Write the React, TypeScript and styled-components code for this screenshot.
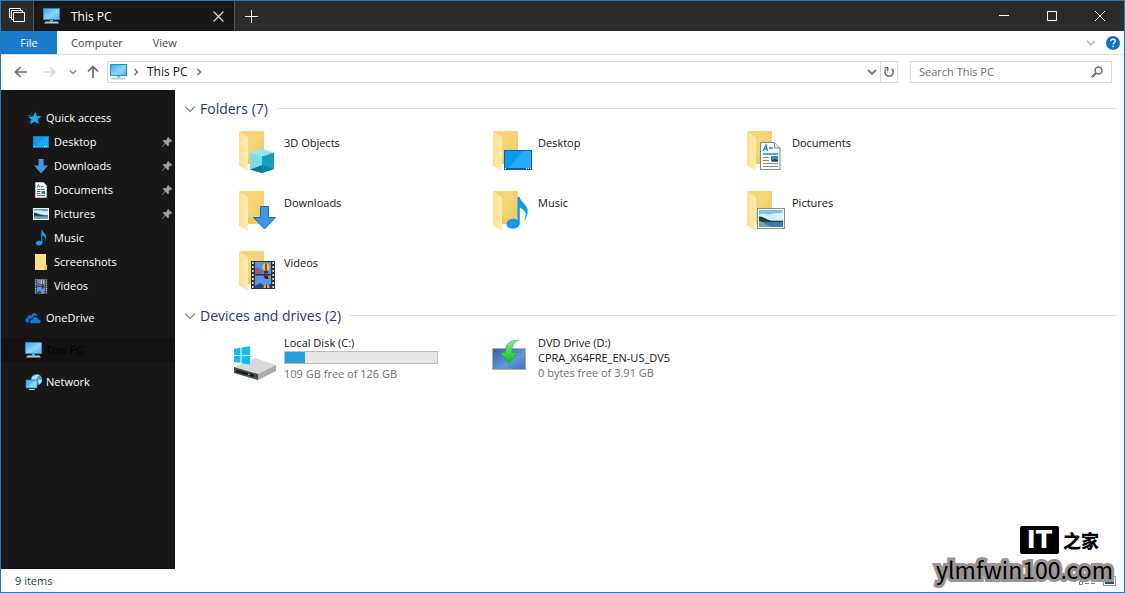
import React from "react";
import styled, { createGlobalStyle } from "styled-components";

const GlobalStyle = createGlobalStyle`
  *, *::before, *::after { box-sizing: border-box; }
  body {
    margin: 0;
    background: #fff;
    font-family: "Open Sans", "Noto Sans", sans-serif;
    font-size: 11px;
    line-height: 16px;
    color: #111;
  }
  button, input { font: inherit; color: inherit; }
  button { border: 0; padding: 0; background: none; cursor: pointer; }
  a { color: inherit; text-decoration: none; }
  ul { list-style: none; margin: 0; padding: 0; }
  svg { display: block; flex: none; }
`;

const Window = styled.div`
  position: relative;
  display: flex;
  flex-direction: column;
  min-height: 100vh;
  border: 1px solid #2a7ab8;
  background: #fff;
`;

/* ---------- title bar ---------- */

const TitleBar = styled.header`
  display: flex;
  height: 30px;
  background: #2b2b2b;
  color: #fff;
`;

const SetButton = styled.button<{ $width: number }>`
  display: flex;
  align-items: center;
  justify-content: center;
  width: ${(p) => p.$width}px;
  height: 30px;
`;

const WindowTab = styled.div`
  display: flex;
  align-items: center;
  width: 202px;
  padding-left: 9px;
  border: solid #555;
  border-width: 0 1px;
  background: #171717;
  font-size: 12px;
`;

const TabTitle = styled.span`
  flex: 1;
  padding: 2px 0 0 11px;
`;

const CaptionButtons = styled.div`
  display: flex;
  margin-left: auto;
`;

/* ---------- ribbon ---------- */

const Ribbon = styled.nav`
  display: flex;
  align-items: center;
  height: 24px;
  padding-right: 4px;
  border-bottom: 1px solid #dcdddf;
`;

const RibbonTab = styled.button<{ $primary?: boolean }>`
  height: 23px;
  min-width: 56px;
  padding: 0 14px;
  color: ${(p) => (p.$primary ? "#fff" : "#444")};
  background: ${(p) => (p.$primary ? "#1979ca" : "none")};
`;

const RibbonEnd = styled.div`
  display: flex;
  align-items: center;
  gap: 10px;
  margin-left: auto;
`;

/* ---------- address row ---------- */

const AddressRow = styled.div`
  display: flex;
  align-items: center;
  height: 35px;
  padding: 0 12px 2px 12px;
`;

const NavButtons = styled.div`
  display: flex;
  align-items: center;
  gap: 12px;
  padding-right: 6px;
`;

const UpButton = styled.button`
  margin-left: -4px;
`;

const AddressBox = styled.div`
  display: flex;
  align-items: center;
  flex: 1;
  height: 22px;
  padding-left: 2px;
  border: 1px solid #d9d9d9;
`;

const Crumbs = styled.div`
  display: flex;
  align-items: center;
  gap: 6px;
  padding-left: 4px;
`;

const Crumb = styled.button`
  color: #111;
  font-size: 12px;
`;

const RefreshButton = styled.button`
  display: flex;
  align-items: center;
  justify-content: center;
  width: 17px;
  height: 20px;
  border-left: 1px solid #d9d9d9;
`;

const ChevronButton = styled.button`
  margin-left: auto;
  padding-right: 3px;
`;

const SearchBox = styled.form`
  display: flex;
  align-items: center;
  width: 202px;
  height: 22px;
  margin-left: 12px;
  padding: 0 8px;
  border: 1px solid #d9d9d9;
`;

const SearchInput = styled.input`
  flex: 1;
  min-width: 0;
  padding: 0;
  border: 0;
  outline: 0;
  background: none;
  &::placeholder { color: #6d6d6d; opacity: 1; }
`;

/* ---------- body ---------- */

const Body = styled.div`
  display: flex;
  flex: 1;
`;

const Sidebar = styled.nav`
  display: flex;
  flex-direction: column;
  gap: 8px;
  width: 174px;
  flex: none;
  padding-top: 16px;
  background: #171717;
  color: #fff;
`;

const SideLink = styled.a<{ $child?: boolean; $current?: boolean }>`
  display: flex;
  align-items: center;
  gap: 4px;
  height: 24px;
  padding: 0 2px 0 ${(p) => (p.$child ? 32 : 24)}px;
  color: ${(p) => (p.$current ? "#000" : "#fff")};
  background: ${(p) => (p.$current ? "#121212" : "none")};
`;

const SideLabel = styled.span`
  flex: 1;
`;

const Content = styled.main`
  flex: 1;
  min-width: 0;
  padding: 8px 7px 0 9px;
`;

const Group = styled.section`
  margin-bottom: 9px;
`;

const GroupHeader = styled.h2`
  display: flex;
  align-items: center;
  gap: 4px;
  margin: 0;
  height: 21px;
  color: #1e3287;
  font-size: 14px;
  font-weight: 400;
  line-height: 20px;
  &::after {
    content: "";
    flex: 1;
    height: 1px;
    margin-left: 4px;
    background: #dfdfdf;
  }
`;

const Tiles = styled.ul`
  display: grid;
  grid-template-columns: repeat(auto-fill, 254px);
  row-gap: 12px;
  padding: 9px 0 0 48px;
`;

const Tile = styled.a`
  display: flex;
  gap: 4px;
`;

const TileText = styled.span<{ $drive?: boolean }>`
  display: flex;
  flex-direction: column;
  width: 154px;
  padding-top: ${(p) => (p.$drive ? 0 : 7)}px;
  line-height: ${(p) => (p.$drive ? 15 : 16)}px;
  white-space: nowrap;
`;

const Muted = styled.span`
  color: #6d6d6d;
`;

const Meter = styled.span`
  display: block;
  height: 13px;
  margin: 1px 0 2px;
  border: 1px solid #bcbcbc;
  background: #e6e6e6;
`;

const MeterFill = styled.span`
  display: block;
  height: 11px;
  background: #26a0da;
`;

/* ---------- status bar ---------- */

const StatusBar = styled.footer`
  display: flex;
  align-items: center;
  justify-content: space-between;
  height: 23px;
  padding: 0 8px 0 14px;
  color: #1e395b;
`;

const ViewButtons = styled.div`
  display: flex;
  gap: 7px;
`;

/* ---------- site marks over the corner ---------- */

const Marks = styled.div`
  position: absolute;
  right: 11px;
  bottom: 8px;
  display: flex;
  flex-direction: column;
  align-items: flex-end;
  pointer-events: none;
  color: #000;
`;

const ItHome = styled.div`
  display: flex;
  align-items: center;
  gap: 4px;
  height: 28px;
  padding-right: 14px;
  font: 900 18px/26px "Noto Sans CJK SC", sans-serif;
`;

const ItBadge = styled.span`
  width: 39px;
  border-radius: 2px;
  background: #000;
  color: #fff;
  font: 700 24px/28px "DejaVu Sans", sans-serif;
  text-align: center;
`;

const SiteName = styled.div`
  font: 400 23px/30px "Noto Sans CJK SC", sans-serif;
  -webkit-text-stroke: 6px #999393;
  paint-order: stroke fill;
`;

/* ---------- icons ---------- */

const PcIcon = () => (
  <svg width="17" height="16" viewBox="0 0 17 16">
    <defs>
      <linearGradient id="pc" x1="0" y1="0" x2="1" y2="1">
        <stop offset="0" stopColor="#35a8f0" />
        <stop offset=".55" stopColor="#8bd5fb" />
        <stop offset="1" stopColor="#4db5f3" />
      </linearGradient>
    </defs>
    <rect x=".5" y=".5" width="16" height="11" fill="url(#pc)" stroke="#3a87b9" />
    <path d="M7 12h3v1.500H7z" fill="#7faecb" />
    <path d="M2.500 13.500h12l1.500 2H1z" fill="#a9cfe4" />
  </svg>
);

const Chevron = ({ dir = "down", size = 10, color = "#777", weight = 1.5 }: { dir?: "down" | "right"; size?: number; color?: string; weight?: number }) => (
  <svg width={size} height={size} viewBox="0 0 10 10" fill="none" stroke={color} strokeWidth={weight}>
    <path d={dir === "down" ? "M1 3l4 4 4-4" : "M3.500 2l3 3-3 3"} />
  </svg>
);

const Arrow = ({ color, turn = 0 }: { color: string; turn?: number }) => (
  <svg width="16" height="16" viewBox="0 0 16 16" fill="none" stroke={color} strokeWidth="1.700">
    <path transform={`rotate(${turn} 8 8)`} d="M14 8H3M7.500 3L2.500 8l5 5" />
  </svg>
);

const StarIcon = () => (
  <svg width="17" height="16" viewBox="0 0 17 16">
    <path d="M10.500 1.500l1.200 4.500 5 .2-4 3 1 5-4.200-2.600L5 14.500l1.400-5L3.500 7l4.600-.8z" fill="#2ba2ee" />
    <path d="M3 5.500l3 .2M3.500 12l2-1.500M5.500 3l1.500 1.500" stroke="#1979ca" />
  </svg>
);

const PinIcon = () => (
  <svg width="12" height="12" viewBox="0 0 12 12">
    <path d="M7 .8L11.200 5l-1 .7-.8-.2-1.700 1.700.2 2.200-.9.800L4.600 7.800 1 11.200l-.3-.3L4 7.300 1.700 5l.8-.9 2.300.2L6.500 2.600l-.2-.9z" fill="#9aa0a6" />
  </svg>
);

const DesktopMini = () => (
  <svg width="17" height="16" viewBox="1 0 17 16">
    <rect x="1.500" y="2.500" width="15" height="11" fill="#0f9bf3" stroke="#0f7fcf" />
    <path d="M2 13L14 3h2v10z" fill="#1ea8fb" />
    <path d="M2 12.500h2m8 0h4" stroke="#cfeaff" strokeDasharray="1 1" />
  </svg>
);

const DownMini = () => (
  <svg width="17" height="16" viewBox="1 0 17 16">
    <path d="M6.500 1h5v6.500H16L9 15.500 2 7.500h4.500z" fill="#3f97e3" />
  </svg>
);

const PageArt = () => (
  <>
    <path d="M.5.500h14l5.500 5.500v21.500H.5z" fill="#fff" stroke="#7d858b" />
    <path d="M14.500.500V6H20" fill="#e9ecee" stroke="#7d858b" />
    <path d="M3 9l3-6 1.500 6M4 7h3M9 6h4M3 12h15" fill="none" stroke="#1690bd" strokeWidth="1.300" />
    <path d="M3 15.500h6M3 18.500h6M3 21.500h15M3 24.500h15" stroke="#858b90" />
    <path d="M11 14h7v5.500h-7z" fill="#2c8cb7" />
    <path d="M11 19.500l4-2.500 3 1v1.500z" fill="#14433d" />
  </>
);

const PageMini = () => (
  <svg width="17" height="16" viewBox="1 0 17 16">
    <path d="M3.500.500h8l3 3v12h-11z" fill="#fff" stroke="#b9bdc0" />
    <path d="M5 5.500l1.500-3 1 3M8.500 4.500h3M5 7.500h8" fill="none" stroke="#1690bd" />
    <path d="M5 9.500h3.500M5 11.500h3.500M5 13.500h8" stroke="#5f676c" />
    <path d="M9.500 9h3.500v3H9.500z" fill="#1a7a8c" />
  </svg>
);

const PhotoArt = () => (
  <>
    <rect x=".5" y=".5" width="27" height="20" fill="#fff" stroke="#868c91" />
    <path d="M2 2h24v17H2z" fill="#7fc0ef" />
    <path d="M2 7c5-3 9 1 13-1s7 0 11-2v8H2z" fill="#dbeefa" />
    <path d="M2 8.500c5 0 9 4 13 4.500h11v1H2z" fill="#17423e" />
    <path d="M2 14h24v5H2z" fill="#377ba8" />
    <path d="M2 13c6 1 7 4 13 6H2z" fill="#71a8a1" />
  </>
);

const PhotoMini = () => (
  <svg width="17" height="16" viewBox="1 0 17 16">
    <rect x="1.500" y="2.500" width="15" height="11" fill="#5ba3dc" stroke="#fff" />
    <path d="M2 5c5-2 8 1 14 0v4H2z" fill="#d5ebf8" />
    <path d="M2 6.500c5 1 8 3 14 3v1H2z" fill="#184e51" />
    <path d="M2 10.500h14V13H2z" fill="#6bacb9" />
  </svg>
);

const noteShape = "M11.500 0h2.200c.5 5 8 7.500 8 14 0 3.500-1.500 6.500-2.700 9l-.7-.4c.8-2 1.600-4 1.300-6-.4-3-3-5-5.800-5.600V26c0 3.500-3 5.700-6.800 5.700S.5 30 .5 27.200c0-3.200 3.200-5.400 7-5.400 1.500 0 3 .3 4 1z";

const NoteMini = () => (
  <svg width="17" height="16" viewBox="1 0 17 16">
    <path transform="translate(3.500 .300) scale(.5 .48)" d={noteShape} fill="#129af0" />
  </svg>
);

const FolderMini = () => (
  <svg width="17" height="16" viewBox="1 0 17 16">
    <path d="M3 0h11v11h1v5H3z" fill="#ffe18a" />
    <path d="M12.500 11.500h2V16h-2z" fill="#f0bd3f" />
  </svg>
);

const FilmArt = () => (
  <>
    <path d="M0 0h24v28H0z" fill="#303236" />
    <path d="M1.800 1v27M22.200 1v27" stroke="#eceff1" strokeWidth="1.600" strokeDasharray="2 2" />
    <path d="M4 1h16v12H4zM4 14.500h16V27H4z" fill="#5a93e8" />
    <path d="M4 7c4-2 6 1 9 4l-2 2H4z" fill="#8a5c93" />
    <path d="M4 25l5-3 5 3 6-2v4H4z" fill="#28458f" />
    <ellipse cx="15" cy="6" rx="3.500" ry="3.800" fill="#efcc39" />
    <path d="M15 2.500v7.500" stroke="#6b2727" strokeWidth="1.600" />
    <path d="M13 10h4v2.500h-4z" fill="#4b2a2a" />
    <path d="M12.500 14.500h6L17 18h-3z" fill="#3a2436" />
    <path d="M17 14.500h2l-2 3z" fill="#e0862c" />
    <path d="M12.500 27c0-5 6-5 6 0z" fill="#e3b52c" />
    <path d="M15.500 23.500V27" stroke="#382030" />
  </>
);

const FilmMini = () => (
  <svg width="17" height="16" viewBox="1 0 17 16">
    <g transform="translate(2.500 .8) scale(.54)"><FilmArt /></g>
  </svg>
);

const CloudIcon = () => (
  <svg width="17" height="16" viewBox="1 0 17 16">
    <path d="M3.500 12.500C.2 12.500.3 8.200 3.200 8c0-3 3.200-3.500 4-2.500C8.500 2 13 2.300 14 6c-3-.8-5 .3-5.600 2.200-3-.1-4 2.200-3.200 4.300z" fill="#0f6fc5" />
    <path d="M7.500 13.500c-2.500-.4-2.300-4.300.8-4.300.8-3.300 5.200-3.300 6 0 3.300-.3 3.500 4 .7 4.300z" fill="#1479d3" stroke="#171717" strokeWidth=".5" />
  </svg>
);

const NetworkIcon = () => (
  <svg width="17" height="16" viewBox="0 0 17 16">
    <circle cx="11.500" cy="5.500" r="5.500" fill="#4aa3cf" />
    <path d="M7 3.500C9 .5 13 .3 14.500 1.500 12 2 13 4 11 5.500S9 8 7.500 8zM13 6c2-1 3-.5 4 .5-.5 2-1.500 3.500-3 4z" fill="#b6dfee" />
    <rect x="1" y="6" width="11" height="8" fill="#57bcf5" stroke="#267eae" strokeWidth=".8" />
    <path d="M2 13L10 6.500h1.500v7z" fill="#8dd6fb" />
    <path d="M4 15.500h6" stroke="#a8d4e8" />
  </svg>
);

const FolderArt = () => (
  <>
    <path d="M7.500 3H32v27H16z" fill="#f5d576" />
    <path d="M16 12L32 3v27H16z" fill="url(#foldBack)" />
    <path d="M16 30h15v6H16z" fill="#eec963" />
    <path d="M7 3l9 6.500V43l-9-5.500z" fill="url(#foldFront)" />
  </>
);

const FolderIcon = ({ children }: { children: React.ReactNode }) => (
  <svg width="48" height="48" viewBox="0 0 48 48">
    <defs>
      <linearGradient id="foldFront" x1="0" y1="0" x2="1" y2="0">
        <stop offset="0" stopColor="#fbdf8b" />
        <stop offset="1" stopColor="#ffedb4" />
      </linearGradient>
      <linearGradient id="foldBack" x1="0" y1="0" x2="1" y2="1">
        <stop offset="0" stopColor="#f8dc83" />
        <stop offset="1" stopColor="#eec963" />
      </linearGradient>
    </defs>
    <FolderArt />
    {children}
  </svg>
);

const CubeArt = () => (
  <>
    <path d="M18 24.500l12-3.500 12 3.500-12 4z" fill="#8ee4f0" />
    <path d="M18 24.500l12 4V45l-12-3.500z" fill="#59cbe0" />
    <path d="M30 28.500l12-4V41l-12 4z" fill="#14a0bf" />
    <path d="M18 41.500l12-4.500v8z" fill="#087a8f" />
    <path d="M30 37l12 4-12 4z" fill="#0789a8" />
    <path d="M30 21v16l-12 4.500v-17z" fill="#a6edf5" opacity=".5" />
  </>
);

const DesktopArt = () => (
  <>
    <rect x="18.500" y="22.500" width="27" height="19" fill="#0b99f6" stroke="#0e639c" />
    <path d="M22 41l15-18h8v18z" fill="#28aaff" />
    <path d="M19 40.500h26" stroke="#075f9e" />
    <path d="M19 40.500h2m19 0h5" stroke="#fff" strokeDasharray="1 1" />
  </>
);

const DriveIcon = () => (
  <svg width="48" height="48" viewBox="0 1 48 48">
    <path d="M2 33l21-9 21 7-18 9z" fill="#d8d9da" />
    <path d="M2 33l24 7v6L2 39z" fill="#4b4e50" />
    <path d="M26 40l18-9v6L26 46z" fill="#a9abad" />
    <path d="M4 35.500l18 5.200v2.500L4 38z" fill="#17191a" />
    <path d="M16 40.300l2 .6" stroke="#40d94e" strokeWidth="1.500" />
    <path d="M2 14.800l6.500-1V21H2zM9.500 13.600L18 12.300V21H9.500zM2 22h6.500v7L2 28zM9.500 22H18v8.500l-8.500-1.300z" fill="#10bdee" />
  </svg>
);

const DvdIcon = () => (
  <svg width="48" height="48" viewBox="0 3 48 48">
    <defs>
      <linearGradient id="dvdBox" x1="0" y1="0" x2="1" y2="1">
        <stop offset="0" stopColor="#315f9f" />
        <stop offset=".6" stopColor="#6396d5" />
        <stop offset="1" stopColor="#3c6fb5" />
      </linearGradient>
      <linearGradient id="dvdArrow" x1="0" y1="0" x2="0" y2="1">
        <stop offset="0" stopColor="#7ff08b" />
        <stop offset="1" stopColor="#12b52c" />
      </linearGradient>
    </defs>
    <rect x="6.500" y="16.500" width="33" height="21" fill="url(#dvdBox)" stroke="#a5aeb8" />
    <path d="M32.500 8.300C26 11 26 16 26 20.500h5.500L23 31.500l-8.500-11h5C19 12 24 8 32.500 8.300z" fill="url(#dvdArrow)" stroke="#1da13a" strokeWidth=".6" />
  </svg>
);

/* ---------- data ---------- */

const quickAccess = [
  { name: "Desktop", icon: <DesktopMini />, pinned: true },
  { name: "Downloads", icon: <DownMini />, pinned: true },
  { name: "Documents", icon: <PageMini />, pinned: true },
  { name: "Pictures", icon: <PhotoMini />, pinned: true },
  { name: "Music", icon: <NoteMini /> },
  { name: "Screenshots", icon: <FolderMini /> },
  { name: "Videos", icon: <FilmMini /> },
];

const folders = [
  { name: "3D Objects", art: <CubeArt /> },
  { name: "Desktop", art: <DesktopArt /> },
  { name: "Documents", art: <g transform="translate(20 14)"><PageArt /></g> },
  { name: "Downloads", art: <path d="M28.500 18.500h8v11h7L32.500 41 21.500 29.500h7z" fill="#3c97e8" stroke="#2569ad" /> },
  { name: "Music", art: <path transform="translate(20 9)" d={noteShape} fill="#1299ec" /> },
  { name: "Pictures", art: <g transform="translate(17 20)"><PhotoArt /></g> },
  { name: "Videos", art: <g transform="translate(19 13)"><FilmArt /></g> },
];

export default function App() {
  return (
    <>
      <GlobalStyle />
      <Window>
        <TitleBar>
          <SetButton $width={32} aria-label="Tabs">
            <svg width="16" height="16" viewBox="0 0 16 16" fill="none" stroke="#fff">
              <path d="M2.500 9.500h-2v-9h11v2M4.500 11.500h-2v-9h11v2M4.500 4.500h11v9h-11z" />
            </svg>
          </SetButton>
          <WindowTab>
            <PcIcon />
            <TabTitle>This PC</TabTitle>
            <SetButton $width={32} aria-label="Close tab">
              <svg width="11" height="11" viewBox="0 0 11 11" stroke="#ddd" strokeWidth="1.200"><path d="M.5.500l10 10m0-10l-10 10" /></svg>
            </SetButton>
          </WindowTab>
          <SetButton $width={32} aria-label="New tab">
            <svg width="13" height="13" viewBox="0 0 13 13" stroke="#fff"><path d="M6.500 0v13M0 6.500h13" /></svg>
          </SetButton>
          <CaptionButtons>
            <SetButton $width={48} aria-label="Minimize">
              <svg width="10" height="10" viewBox="0 0 10 10" stroke="#fff"><path d="M0 4.500h10" /></svg>
            </SetButton>
            <SetButton $width={48} aria-label="Maximize">
              <svg width="10" height="10" viewBox="0 0 10 10" stroke="#fff" fill="none"><path d="M.5.500h9v9h-9z" /></svg>
            </SetButton>
            <SetButton $width={48} aria-label="Close">
              <svg width="10" height="10" viewBox="0 0 10 10" stroke="#fff"><path d="M0 0l10 10m0-10L0 10" /></svg>
            </SetButton>
          </CaptionButtons>
        </TitleBar>

        <Ribbon aria-label="Ribbon">
          <RibbonTab $primary>File</RibbonTab>
          <RibbonTab>Computer</RibbonTab>
          <RibbonTab>View</RibbonTab>
          <RibbonEnd>
            <button aria-label="Expand ribbon"><Chevron color="#aaa" weight={1.2} /></button>
            <button aria-label="Help">
              <svg width="14" height="14" viewBox="0 0 14 14">
                <circle cx="7" cy="7" r="7" fill="#1072c4" />
                <path d="M4.800 5.200c.2-2.800 4.500-2.500 4.400 0 0 1.500-2.100 1.500-2.100 3.300M7.100 9.800v1.400" fill="none" stroke="#fff" strokeWidth="1.400" />
              </svg>
            </button>
          </RibbonEnd>
        </Ribbon>

        <AddressRow>
          <NavButtons>
            <button aria-label="Back"><Arrow color="#6a6a6a" /></button>
            <button aria-label="Forward"><Arrow color="#dadada" turn={180} /></button>
            <button aria-label="Recent locations"><Chevron size={8} color="#888" weight={1.800} /></button>
            <UpButton aria-label="Up"><Arrow color="#6a6a6a" turn={90} /></UpButton>
          </NavButtons>
          <AddressBox>
            <PcIcon />
            <Crumbs>
              <Chevron dir="right" />
              <Crumb>This PC</Crumb>
              <Chevron dir="right" />
            </Crumbs>
            <ChevronButton aria-label="Previous locations"><Chevron weight={1.800} /></ChevronButton>
            <RefreshButton aria-label="Refresh">
              <svg width="12" height="12" viewBox="0 0 12 12" fill="none" stroke="#6f6f6f" strokeWidth="1.500">
                <path d="M8.800 2.800A4.200 4.200 0 1 1 3 3.200M1.500 1.800h3.200v3.400" />
              </svg>
            </RefreshButton>
          </AddressBox>
          <SearchBox role="search" onSubmit={(e) => e.preventDefault()}>
            <SearchInput aria-label="Search This PC" placeholder="Search This PC" />
            <button aria-label="Search">
              <svg width="12" height="12" viewBox="0 0 12 12" fill="none" stroke="#6f6f6f">
                <circle cx="7.500" cy="4.500" r="3.500" strokeWidth="1.500" />
                <path d="M5 7L.8 11.200" strokeWidth="2" />
              </svg>
            </button>
          </SearchBox>
        </AddressRow>

        <Body>
          <Sidebar aria-label="Navigation pane">
            <ul>
              <li><SideLink href="#quick"><StarIcon /><SideLabel>Quick access</SideLabel></SideLink></li>
              {quickAccess.map((q) => (
                <li key={q.name}>
                  <SideLink href={`#${q.name}`} $child>
                    {q.icon}
                    <SideLabel>{q.name}</SideLabel>
                    {q.pinned && <PinIcon />}
                  </SideLink>
                </li>
              ))}
            </ul>
            <SideLink href="#onedrive"><CloudIcon /><SideLabel>OneDrive</SideLabel></SideLink>
            <SideLink href="#pc" $current aria-current="page"><PcIcon /><SideLabel>This PC</SideLabel></SideLink>
            <SideLink href="#network"><NetworkIcon /><SideLabel>Network</SideLabel></SideLink>
          </Sidebar>

          <Content>
            <Group>
              <GroupHeader><Chevron size={12} weight={0.9} />Folders (7)</GroupHeader>
              <Tiles>
                {folders.map((f) => (
                  <li key={f.name}>
                    <Tile href={`#${f.name}`}>
                      <FolderIcon>{f.art}</FolderIcon>
                      <TileText>{f.name}</TileText>
                    </Tile>
                  </li>
                ))}
              </Tiles>
            </Group>
            <Group>
              <GroupHeader><Chevron size={12} weight={0.9} />Devices and drives (2)</GroupHeader>
              <Tiles>
                <li>
                  <Tile href="#c">
                    <DriveIcon />
                    <TileText $drive>
                      <span>Local Disk (C:)</span>
                      <Meter role="progressbar" aria-label="Space used" aria-valuenow={14}>
                        <MeterFill style={{ width: `${Math.round(((126 - 109) / 126) * 100)}%` }} />
                      </Meter>
                      <Muted>109 GB free of 126 GB</Muted>
                    </TileText>
                  </Tile>
                </li>
                <li>
                  <Tile href="#d">
                    <DvdIcon />
                    <TileText $drive>
                      <span>DVD Drive (D:)</span>
                      <span>CPRA_X64FRE_EN-US_DV5</span>
                      <Muted>0 bytes free of 3.91 GB</Muted>
                    </TileText>
                  </Tile>
                </li>
              </Tiles>
            </Group>
          </Content>
        </Body>

        <StatusBar>
          <span>9 items</span>
          <ViewButtons>
            <button aria-label="Details view">
              <svg width="17" height="10" viewBox="0 0 17 10" fill="none" stroke="#777">
                <path d="M.5.500h3v3h-3zM.5 5.500h3v3h-3zM6 2.500h4M12 2.500h4M6 7.500h4M12 7.500h4" />
              </svg>
            </button>
            <button aria-label="Large icons view">
              <svg width="13" height="10" viewBox="0 0 13 10">
                <rect x=".5" y=".5" width="12" height="9" fill="#fff" stroke="#999" />
                <path d="M2 2h9v6H2z" fill="#8ecbe0" />
                <path d="M2 4l9 2v2H2z" fill="#1f5b62" />
              </svg>
            </button>
          </ViewButtons>
        </StatusBar>

        <Marks>
          <ItHome><ItBadge>IT</ItBadge>之家</ItHome>
          <SiteName>ylmfwin100.com</SiteName>
        </Marks>
      </Window>
    </>
  );
}
